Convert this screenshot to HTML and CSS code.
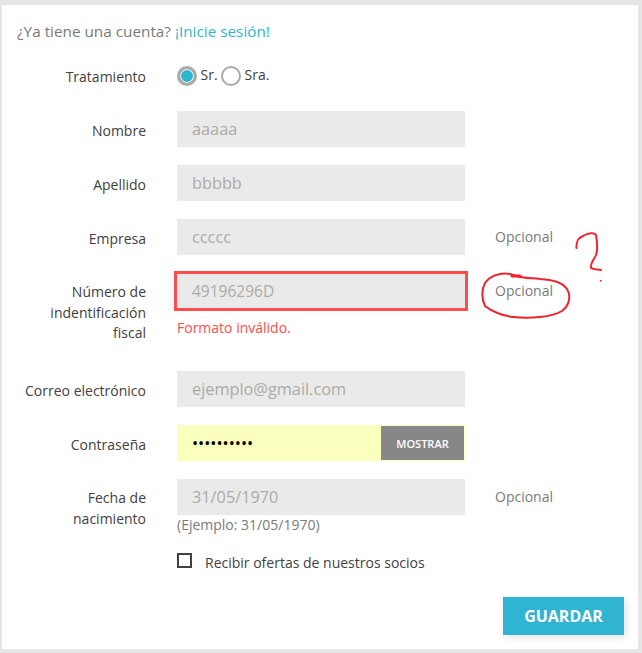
FILE: index.html
```html
<!DOCTYPE html>
<html lang="es">

<head>
    <meta charset="UTF-8">
    <title>Datos personales</title>
    <link rel="stylesheet" href="styles.css">
</head>

<body>
    <div class="card">
        <p class="login-line">¿Ya tiene una cuenta? <a href="#">¡Inicie sesión!</a></p>

        <form class="form">
            <div class="row row-radio">
                <label class="label">Tratamiento</label>
                <div class="radios">
                    <span class="radio radio-on"></span><span class="radio-text">Sr.</span>
                    <span class="radio"></span><span class="radio-text">Sra.</span>
                </div>
            </div>

            <div class="row">
                <label class="label">Nombre</label>
                <div class="field">aaaaa</div>
            </div>

            <div class="row">
                <label class="label">Apellido</label>
                <div class="field">bbbbb</div>
            </div>

            <div class="row">
                <label class="label">Empresa</label>
                <div class="field">ccccc</div>
                <span class="note">Opcional</span>
            </div>

            <div class="row row-error">
                <label class="label">Número de indentificación fiscal</label>
                <div class="field-wrap">
                    <div class="field field-bad">49196296D</div>
                    <p class="error">Formato inválido.</p>
                </div>
                <span class="note">Opcional</span>
            </div>

            <div class="row">
                <label class="label">Correo electrónico</label>
                <div class="field">ejemplo@gmail.com</div>
            </div>

            <div class="row">
                <label class="label">Contraseña</label>
                <div class="password">
                    <div class="password-value">••••••••••</div>
                    <button type="button" class="show">MOSTRAR</button>
                </div>
            </div>

            <div class="row row-date">
                <label class="label">Fecha de nacimiento</label>
                <div class="field-wrap">
                    <div class="field">31/05/1970</div>
                    <p class="hint">(Ejemplo: 31/05/1970)</p>
                </div>
                <span class="note">Opcional</span>
            </div>

            <div class="row-check">
                <span class="checkbox"></span>
                <span class="check-text">Recibir ofertas de nuestros socios</span>
            </div>

            <div class="footer">
                <button type="button" class="save">GUARDAR</button>
            </div>
        </form>

        <svg class="scribble" width="642" height="653" viewBox="0 0 642 653" fill="none" stroke="#f0222c" stroke-width="2" stroke-linecap="round" stroke-linejoin="round">
            <path d="M510 274 C500 272 490 276 485 283 C481 290 482 300 485 306 C491 311 503 316 513 317 C530 319 552 317 562 311 C570 305 571 295 567 289 C562 282 553 280 540 279 C530 278 522 278 516 276 C513 275 511 274 510 274"/>
            <path d="M512 276 L520 276" stroke-width="3"/>
            <path d="M576.500 248 C576 241 578 238 583 236 C588 233 594 232 596 235 C597 241 598 250 596 255 C594 260 590 263 591 268 C594 270 598 269 601 270"/>
            <path d="M600.500 280.500 L601 281" stroke-width="1.500"/>
        </svg>
    </div>
</body>

</html>
```

FILE: styles.css
```css
html {
    background-color: #e6e6e6;
}

body {
    margin: 0;
    padding: 5px 4px 4px 2px;
    font-family: "Open Sans", sans-serif;
    font-size: 14px;
    color: #414141;
}

.card {
    position: relative;
    height: 644px;
    background-color: #fff;
    padding: 16px 14px 0 15px;
    box-sizing: border-box;
}

.login-line {
    margin: 0;
    font-size: 15.300px;
    line-height: 21px;
    color: #7a7a7a;
}

.login-line a {
    color: #2fb5d2;
    text-decoration: none;
}

.form {
    margin-top: 19px;
}

.row {
    display: flex;
    align-items: flex-start;
    margin-bottom: 18px;
}

.label {
    width: 129px;
    flex: none;
    margin-right: 31px;
    text-align: right;
    line-height: 21px;
    padding-top: 9px;
}

.field {
    width: 288px;
    height: 36px;
    box-sizing: border-box;
    padding-left: 15px;
    background-color: #eaeaea;
    color: #acaaa6;
    font-size: 16.300px;
    line-height: 36px;
}

.field-wrap {
    width: 288px;
    flex: none;
}

.note {
    margin-left: 30px;
    line-height: 36px;
    color: #7a7a7a;
}

.row-radio {
    height: 32px;
}

.row-radio .label {
    padding-top: 5px;
}

.radios {
    display: flex;
    align-items: center;
    height: 20px;
    margin-top: 5px;
}

.radio {
    width: 20px;
    height: 20px;
    box-sizing: border-box;
    border: 2px solid #acaaa6;
    border-radius: 50%;
}

.radio-on {
    border-width: 3px;
    background-color: #2fb5d2;
    box-shadow: inset 0 0 0 1px #fff;
}

.radio-text {
    margin: -2px 3.500px 0 3.500px;
    line-height: 20px;
}

.row-error {
    height: 100px;
    margin-top: -2px;
    margin-bottom: 0;
}

.row-error .label {
    padding-top: 11px;
    line-height: 20.500px;
}

.row-error .note {
    line-height: 40px;
}

.field-bad {
    width: 294px;
    height: 40px;
    margin-left: -3px;
    padding-left: 15px;
    border: 3px solid #ff4c4c;
    font-size: 15.500px;
    line-height: 34px;
}

.error {
    margin: 6px 0 0;
    line-height: 21px;
    color: #ff4c4c;
}

.password {
    display: flex;
    width: 288px;
    height: 36px;
    background-color: #faffbd;
}

.password-value {
    flex: 1;
    padding-left: 15px;
    color: #000;
    font-size: 16.300px;
    line-height: 36px;
}

.show {
    width: 83px;
    height: 34px;
    margin-top: 1px;
    margin-right: 1px;
    padding: 0;
    border: 0;
    background-color: #878787;
    color: #fff;
    font-family: inherit;
    font-size: 11px;
    font-weight: 600;
}

.row-date {
    margin-bottom: 0;
}

.row-date .label {
    padding-top: 8px;
}

.hint {
    margin: 0;
    line-height: 20px;
    color: #7a7a7a;
}

.row-check {
    display: flex;
    align-items: center;
    margin: 17px 0 0 160px;
    height: 21px;
}

.checkbox {
    width: 15px;
    height: 15px;
    box-sizing: border-box;
    border: 2px solid #414141;
    margin-top: -4px;
}

.check-text {
    margin-left: 13px;
}

.footer {
    display: flex;
    justify-content: flex-end;
    margin-top: 24px;
}

.save {
    width: 121px;
    height: 38px;
    padding: 0;
    border: 0;
    background-color: #2fb5d2;
    color: #fff;
    font-family: inherit;
    font-size: 16px;
    font-weight: 700;
    box-shadow: 2px 2px 8px rgba(0, 0, 0, 0.12);
}

.scribble {
    position: absolute;
    top: -5px;
    left: -2px;
    pointer-events: none;
}
```
